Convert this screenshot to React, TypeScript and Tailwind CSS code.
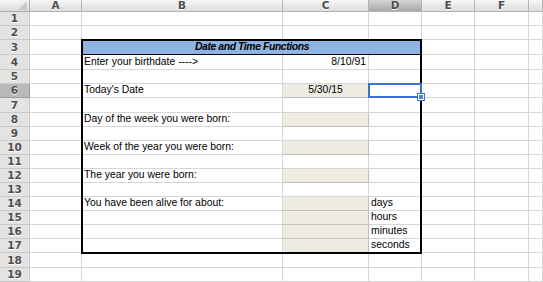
import React from 'react'

const COL_WIDTHS = ['w-[52px]', 'w-[201px]', 'w-[86px]', 'w-[53px]', 'w-[53px]', 'w-[54px]', 'flex-1']
const COL_NAMES = ['A', 'B', 'C', 'D', 'E', 'F', '']
const ROW_HEIGHTS = [14, 14, 15, 15, 14, 14, 15, 14, 14, 14, 14, 14, 14, 14, 14, 14, 14, 15, 14]
const H: Record<number, string> = { 14: 'h-[14px]', 15: 'h-[15px]' }

type Cell = { text?: string; align?: 'left' | 'right' | 'center'; fill?: boolean }

// row -> col index (0 = A) -> cell
const CELLS: Record<number, Record<number, Cell>> = {
  4: { 1: { text: 'Enter your birthdate ---->' }, 2: { text: '8/10/91', align: 'right' } },
  6: { 1: { text: "Today's Date" }, 2: { text: '5/30/15', align: 'center', fill: true } },
  8: { 1: { text: 'Day of the week you were born:' }, 2: { fill: true } },
  10: { 1: { text: 'Week of the year you were born:' }, 2: { fill: true } },
  12: { 1: { text: 'The year you were born:' }, 2: { fill: true } },
  14: { 1: { text: 'You have been alive for about:' }, 2: { fill: true }, 3: { text: 'days' } },
  15: { 2: { fill: true }, 3: { text: 'hours' } },
  16: { 2: { fill: true }, 3: { text: 'minutes' } },
  17: { 2: { fill: true }, 3: { text: 'seconds' } },
}

const font = "font-['Liberation_Sans',Arial,sans-serif] text-[10.4px] text-black"
const headFont = "font-['DejaVu_Sans',sans-serif] font-bold text-[10.5px] text-[#4f4f4f] [text-shadow:0_1px_0_#fff]"

function ColumnHeader() {
  return (
    <div className="flex h-[12px] shrink-0">
      <div className="w-[30px] h-full shrink-0 flex items-end justify-end pr-[2px] pb-[1px] border-r border-b border-[#a9a9a9] bg-gradient-to-b from-[#f7f7f7] to-[#dcdcdc]">
        <svg width="9" height="9" viewBox="0 0 9 9">
          <polygon points="9,0 9,9 0,9" fill="#c9c9c9" />
        </svg>
      </div>
      {COL_NAMES.map((name, i) => (
        <div
          key={i}
          className={[
            COL_WIDTHS[i],
            'h-full shrink-0 flex items-center justify-center border-r border-b border-[#b3b3b3] leading-none',
            headFont,
            name === 'D' ? 'bg-gradient-to-b from-[#d6d6d6] to-[#a8a8a8]' : 'bg-gradient-to-b from-[#f7f7f7] to-[#dcdcdc]',
          ].join(' ')}
        >
          {name}
        </div>
      ))}
    </div>
  )
}

function SheetRow({ row }: { row: number }) {
  const h = H[ROW_HEIGHTS[row - 1]]
  const cells = CELLS[row] || {}

  return (
    <div className={`flex shrink-0 ${h}`}>
      <div
        className={[
          'w-[30px] h-full shrink-0 flex items-center justify-center border-r border-b leading-none',
          headFont,
          row === 6 ? 'bg-[#b9b9b9] border-[#9a9a9a]' : 'bg-[#e3e3e3] border-[#c9c9c9]',
        ].join(' ')}
      >
        {row}
      </div>
      {row === 3 ? (
        <>
          <div className="w-[52px] h-full shrink-0 border-r border-b border-[#d6d6d6]" />
          <div className="w-[340px] h-full shrink-0 flex items-center justify-center bg-[#8db4e2] border-b border-black">
            <span className={`${font} font-bold italic tracking-[-0.4px] leading-none`}>Date and Time Functions</span>
          </div>
          {COL_WIDTHS.slice(4).map((w, i) => (
            <div key={i} className={`${w} h-full shrink-0 border-r border-b border-[#d6d6d6]`} />
          ))}
        </>
      ) : (
        COL_WIDTHS.map((w, i) => {
          const c = cells[i]
          return (
            <div
              key={i}
              className={[
                w,
                'h-full shrink-0 flex items-center border-r border-b overflow-hidden whitespace-nowrap px-[2px] leading-none',
                font,
                c?.fill ? 'bg-[#eeece1] border-[#bfbfbf]' : 'border-[#d6d6d6]',
                c?.align === 'right' ? 'justify-end' : c?.align === 'center' ? 'justify-center' : 'justify-start',
              ].join(' ')}
            >
              {c?.text}
            </div>
          )
        })
      )}
    </div>
  )
}

export default function App() {
  const rows = Array.from({ length: 19 }, (_, i) => i + 1)

  return (
    <div className="grid w-[543px] h-[282px] overflow-hidden bg-white">
      <div className="col-start-1 row-start-1 flex flex-col">
        <ColumnHeader />
        {rows.map((r) => (
          <SheetRow key={r} row={r} />
        ))}
      </div>

      {/* overlay layer: table outline and the active cell */}
      <div className="col-start-1 row-start-1 grid pointer-events-none grid-cols-[30px_52px_201px_86px_53px_53px_54px_1fr] grid-rows-[12px_14px_14px_15px_15px_14px_14px_15px_repeat(10,14px)_15px_14px]">
        <div className="col-start-3 col-end-6 row-start-4 row-end-19 -ml-px -mt-px -mb-px border-2 border-black" />
        <div className="relative col-start-5 col-end-6 row-start-7 row-end-8 -ml-px -mt-px border-2 border-[#3a71d5]">
          <div className="absolute -right-[4px] -bottom-[4px] w-[6px] h-[6px] bg-[#4f83e0] border border-white outline outline-1 outline-[#3a71d5]" />
        </div>
      </div>
    </div>
  )
}
